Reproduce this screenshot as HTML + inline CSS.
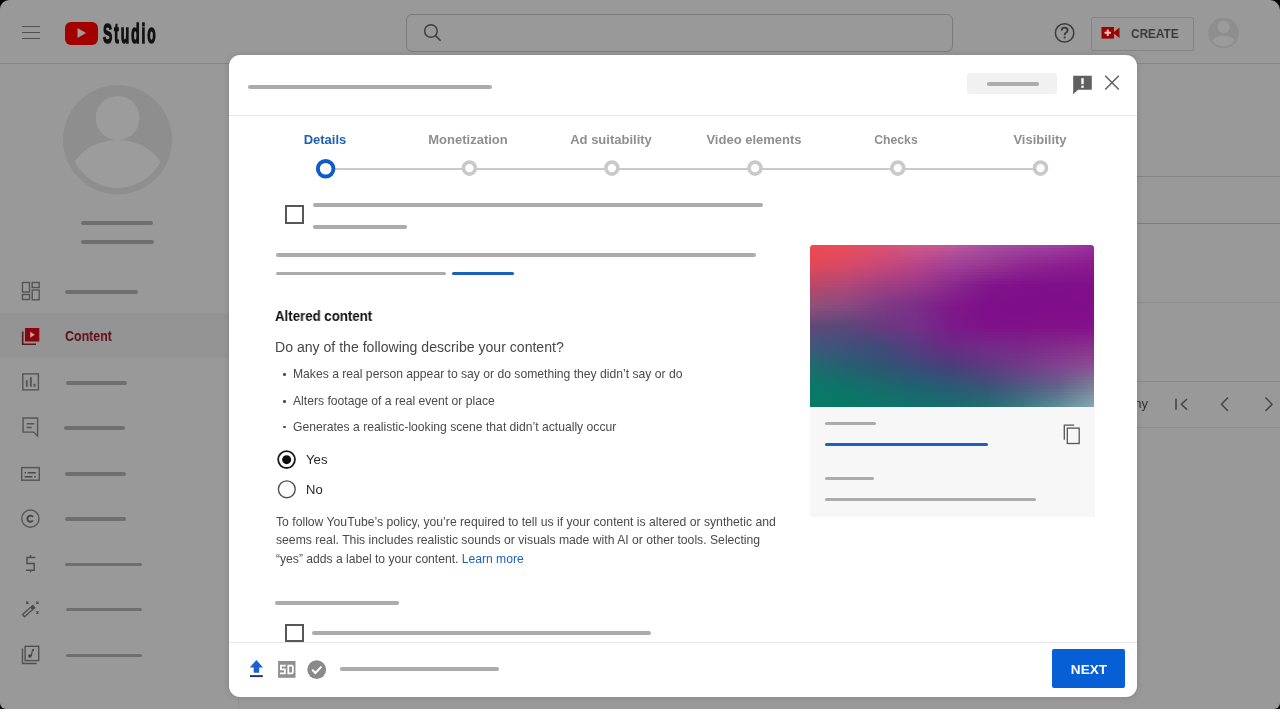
<!DOCTYPE html><html><head><meta charset="utf-8"><style>
html,body{margin:0;padding:0;background:#000;width:1280px;height:709px;overflow:hidden}
#pg{position:absolute;left:0;top:0;width:1280px;height:709px;background:#999;border-radius:9px 10px 6px 6px;overflow:hidden;font-family:"Liberation Sans",sans-serif}
.ln,.tx,.ic,.bx{position:absolute}
.tx{white-space:nowrap;will-change:transform}
</style></head><body><div id="pg">
<div class="bx" style="left:0;top:63px;width:1280px;height:1px;background:#888888"></div>
<div class="bx" style="left:238px;top:63px;width:1px;height:646px;background:#919191"></div>
<div class="bx" style="left:0;top:313px;width:238px;height:45px;background:#949494"></div>
<div class="bx" style="left:239px;top:176px;width:1041px;height:1px;background:#858585"></div>
<div class="bx" style="left:239px;top:223px;width:1041px;height:1px;background:#7d7d7d"></div>
<div class="bx" style="left:239px;top:302px;width:1041px;height:1px;background:#8f8f8f"></div>
<div class="bx" style="left:239px;top:381px;width:1041px;height:1px;background:#8a8a8a"></div>
<div class="bx" style="left:239px;top:427px;width:1041px;height:1px;background:#8b8b8b"></div>
<div class="bx" style="left:22px;top:25.85px;width:17.5px;height:1.5px;background:#505050"></div>
<div class="bx" style="left:22px;top:31.75px;width:17.5px;height:1.5px;background:#505050"></div>
<div class="bx" style="left:22px;top:37.65px;width:17.5px;height:1.5px;background:#505050"></div>
<div class="bx" style="left:65px;top:22px;width:32.5px;height:22.5px;border-radius:6px;background:#a30000"></div>
<svg class="ic" style="left:76px;top:27px" width="12" height="12" viewBox="0 0 12 12"><path d="M1.5 1 L10 6 L1.5 11 Z" fill="#a89898"/></svg>
<div class="tx" style="left:102.5px;top:19.5px;font-size:27.8px;line-height:27.8px;font-weight:bold;color:#121212;transform:scaleX(0.5);transform-origin:0 0;letter-spacing:3.8px;-webkit-text-stroke:1.5px #121212">Studio</div>
<div class="bx" style="left:406px;top:14px;width:545px;height:36px;border:1px solid #7c7c7c;border-radius:6px"></div>
<svg class="ic" style="left:422px;top:22px" width="22" height="22" viewBox="0 0 22 22"><circle cx="8.9" cy="9" r="6.3" fill="none" stroke="#3f3f3f" stroke-width="1.5"/><path d="M13.5 13.6 L18.6 18.8" stroke="#3f3f3f" stroke-width="1.6"/></svg>
<svg class="ic" style="left:1054px;top:22px" width="22" height="22" viewBox="0 0 22 22"><circle cx="10.6" cy="10.9" r="9.2" fill="none" stroke="#3c3c3c" stroke-width="1.5"/><path d="M7.6 8.6 Q7.6 5.6 10.6 5.6 Q13.6 5.6 13.6 8.3 Q13.6 9.9 11.9 10.8 Q10.6 11.5 10.6 13.2" fill="none" stroke="#3a3a3a" stroke-width="1.8"/><rect x="9.65" y="14.6" width="1.9" height="1.9" fill="#3a3a3a"/></svg>
<div class="bx" style="left:1091px;top:16.5px;width:101px;height:32px;border:1px solid #858585;border-radius:2px"></div>
<svg class="ic" style="left:1101px;top:27px" width="19" height="12" viewBox="0 0 19 12"><rect x="0.5" y="0" width="12.5" height="11.6" fill="#a00000"/><path d="M12 5.8 L18.5 0.6 L18.5 11 Z" fill="#a00000"/><path d="M6.75 2.6 V9 M3.5 5.8 H10" stroke="#e8c8c8" stroke-width="2"/></svg>
<div class="tx" style="left:1130.7px;top:26.5px;font-size:13.4px;line-height:13.4px;color:#3a3a3a;font-weight:bold;transform:scaleX(0.88);transform-origin:0 0">CREATE</div>
<svg class="ic" style="left:1207px;top:17px" width="33" height="33" viewBox="0 0 33 33"><defs><clipPath id="ca"><circle cx="16.5" cy="16" r="13.6"/></clipPath></defs><circle cx="16.5" cy="16" r="15.3" fill="#8e8e8e"/><g clip-path="url(#ca)"><circle cx="16.5" cy="10" r="6" fill="#9b9b9b"/><ellipse cx="16.5" cy="28" rx="12.5" ry="9.5" fill="#9b9b9b"/></g><circle cx="16.5" cy="10" r="6" fill="#9b9b9b"/></svg>
<svg class="ic" style="left:62px;top:84px" width="112" height="112" viewBox="0 0 112 112"><defs><clipPath id="cb"><circle cx="55.6" cy="55.8" r="48"/></clipPath></defs><circle cx="55.6" cy="55.8" r="54.5" fill="#8e8e8e"/><g clip-path="url(#cb)"><circle cx="55.6" cy="34" r="21.8" fill="#9c9c9c"/><ellipse cx="55.6" cy="100" rx="50" ry="44" fill="#9c9c9c"/></g><circle cx="55.6" cy="34" r="21.8" fill="#9c9c9c"/></svg>
<div class="ln" style="left:80.5px;top:221.0px;width:72.5px;height:3.8px;border-radius:1.9px;background:#6f6f6f"></div>
<div class="ln" style="left:81.2px;top:240.0px;width:72.8px;height:3.8px;border-radius:1.9px;background:#6f6f6f"></div>
<svg class="ic" style="left:21px;top:281px" width="20" height="20" viewBox="0 0 20 20"><g fill="none" stroke="#555" stroke-width="1.4"><rect x="1.5" y="1.5" width="7" height="9.5"/><rect x="1.5" y="13.5" width="7" height="5"/><rect x="11.2" y="1.5" width="7" height="5"/><rect x="11.2" y="9" width="7" height="9.8"/></g></svg>
<div class="ln" style="left:65.4px;top:289.9px;width:72.8px;height:3.9px;border-radius:1.95px;background:#6f6f6f"></div>
<svg class="ic" style="left:21px;top:327px" width="20" height="20" viewBox="0 0 20 20"><rect x="4" y="1" width="14.3" height="13.5" fill="#8a0410"/><path d="M1.7 4.5 V17.2 H15" fill="none" stroke="#5a1a1a" stroke-width="1.6"/><path d="M9.2 4.8 L13.8 7.8 L9.2 10.8 Z" fill="#c8a0a0"/></svg>
<div class="tx" style="left:65.3px;top:329.4px;font-size:14.2px;line-height:14.2px;color:#640c16;font-weight:bold;transform:scaleX(0.875);transform-origin:0 0">Content</div>
<svg class="ic" style="left:21px;top:372px" width="20" height="20" viewBox="0 0 20 20"><rect x="1.8" y="1.9" width="15.6" height="16" fill="none" stroke="#555" stroke-width="1.4"/><rect x="4.8" y="8.2" width="1.9" height="6.6" fill="#555"/><rect x="8.9" y="5.2" width="1.9" height="9.6" fill="#555"/><rect x="12.4" y="11.8" width="2.1" height="3" fill="#555"/></svg>
<div class="ln" style="left:65.9px;top:380.9px;width:61.5px;height:3.9px;border-radius:1.95px;background:#6f6f6f"></div>
<svg class="ic" style="left:21px;top:416px" width="20" height="22" viewBox="0 0 20 22"><path d="M2.1 2 H16.6 V20 L12.6 16.1 H2.1 Z" fill="none" stroke="#555" stroke-width="1.4" stroke-linejoin="miter"/><path d="M5.7 7.7 H13.3 M5.7 11.5 H10.8" stroke="#555" stroke-width="1.4"/></svg>
<div class="ln" style="left:64.1px;top:426.2px;width:61.4px;height:3.9px;border-radius:1.95px;background:#6f6f6f"></div>
<svg class="ic" style="left:20px;top:466px" width="21" height="16" viewBox="0 0 21 16"><rect x="1.7" y="1.6" width="17.6" height="12.6" fill="none" stroke="#555" stroke-width="1.4"/><path d="M4.6 6.8 H6 M7.6 6.8 H15.8 M4.6 10.8 H12.4 M14.2 10.8 H15.8" stroke="#4a4a4a" stroke-width="1.6"/></svg>
<div class="ln" style="left:65.0px;top:471.8px;width:61.4px;height:3.9px;border-radius:1.95px;background:#6f6f6f"></div>
<svg class="ic" style="left:20px;top:508px" width="21" height="21" viewBox="0 0 21 21"><circle cx="10.4" cy="10.65" r="8.6" fill="none" stroke="#555" stroke-width="1.4"/><path d="M12.9 8.9 A3.05 3.05 0 1 0 12.9 12.5" fill="none" stroke="#444" stroke-width="1.9"/></svg>
<div class="ln" style="left:64.9px;top:516.9px;width:61.6px;height:3.9px;border-radius:1.95px;background:#6f6f6f"></div>
<svg class="ic" style="left:22px;top:553px" width="16" height="22" viewBox="0 0 16 22"><path d="M13.4 4.5 H5 V10.4 H12.2 V17.2 H3.9 M8.5 2.1 V4.5 M8.5 17.2 V19.2" fill="none" stroke="#4f4f4f" stroke-width="1.5" stroke-linejoin="miter"/></svg>
<div class="ln" style="left:64.9px;top:562.5px;width:76.9px;height:3.9px;border-radius:1.95px;background:#6f6f6f"></div>
<svg class="ic" style="left:21px;top:598px" width="20" height="21" viewBox="0 0 20 21"><path d="M1.51 16.48 L11.81 7.38 L13.79 9.62 L3.49 18.72 Z" fill="none" stroke="#4f4f4f" stroke-width="1.3"/><path d="M9.21 9.68 L11.81 7.38 L13.79 9.62 L11.19 11.92 Z" fill="#4a4a4a"/><path d="M5.2 3.6 L7.4 5.8 M7.4 3.6 L5.2 5.8 M15.3 3.6 L17.5 5.8 M17.5 3.6 L15.3 5.8 M15.3 13.3 L17.5 15.5 M17.5 13.3 L15.3 15.5" stroke="#4a4a4a" stroke-width="1.2"/></svg>
<div class="ln" style="left:65.7px;top:607.5px;width:76.1px;height:3.9px;border-radius:1.95px;background:#6f6f6f"></div>
<svg class="ic" style="left:21px;top:645px" width="20" height="20" viewBox="0 0 20 20"><rect x="4.1" y="1.3" width="13.65" height="14.3" fill="none" stroke="#4f4f4f" stroke-width="1.35"/><path d="M1.5 3.5 V18.5 H15.6" fill="none" stroke="#4f4f4f" stroke-width="1.35"/><circle cx="8.9" cy="11" r="1.75" fill="#444"/><path d="M10.4 11 L11.4 5.2" stroke="#444" stroke-width="1.1"/><circle cx="12.1" cy="5.1" r="1.1" fill="#444"/></svg>
<div class="ln" style="left:66.3px;top:653.5px;width:75.5px;height:3.9px;border-radius:1.95px;background:#6f6f6f"></div>
<div class="tx" style="left:1048px;width:100px;text-align:right;top:396.7px;font-size:13px;line-height:13px;color:#333">many</div>
<svg class="ic" style="left:1172px;top:396px" width="20" height="16" viewBox="0 0 20 16"><path d="M4 2.8 V13.7" stroke="#464646" stroke-width="1.6"/><path d="M15 3 L9.4 8.3 L15 13.6" fill="none" stroke="#464646" stroke-width="1.5"/></svg>
<svg class="ic" style="left:1217px;top:396px" width="16" height="16" viewBox="0 0 16 16"><path d="M11 1.6 L4.5 8.3 L11 15" fill="none" stroke="#464646" stroke-width="1.5"/></svg>
<svg class="ic" style="left:1261px;top:396px" width="16" height="16" viewBox="0 0 16 16"><path d="M4.5 1.6 L11 8.3 L4.5 15" fill="none" stroke="#464646" stroke-width="1.5"/></svg>
<div class="bx" style="left:229px;top:55px;width:908px;height:642px;background:#fff;border-radius:11px;box-shadow:0 0 6px rgba(0,0,0,0.15)"></div>
<div class="ln" style="left:248.0px;top:85.1px;width:244.0px;height:4px;border-radius:2.0px;background:#acacac"></div>
<div class="bx" style="left:967px;top:73.4px;width:89.5px;height:20.6px;border-radius:3px;background:#f1f1f1"></div>
<div class="ln" style="left:987.0px;top:82.2px;width:52.0px;height:3.6px;border-radius:1.8px;background:#acacac"></div>
<svg class="ic" style="left:1072px;top:75px" width="21" height="20" viewBox="0 0 21 20"><path d="M1.2 0.8 H19.8 V14.8 H6 L1.2 19.2 Z" fill="#606060"/><rect x="9.3" y="3.2" width="2.4" height="6" fill="#fff"/><rect x="9.3" y="10.6" width="2.4" height="2.3" fill="#fff"/></svg>
<svg class="ic" style="left:1104px;top:75px" width="16" height="16" viewBox="0 0 16 16"><path d="M1.2 0.8 L14.8 14.5 M14.8 0.8 L1.2 14.5" stroke="#5f5f5f" stroke-width="1.5"/></svg>
<div class="bx" style="left:229px;top:114.5px;width:908px;height:1px;background:#e8e8e8"></div>
<div class="tx" style="left:125.2px;width:400px;text-align:center;top:133.0px;font-size:13px;line-height:13px;color:#1f5fb6;font-weight:bold;">Details</div>
<div class="tx" style="left:267.9px;width:400px;text-align:center;top:133.0px;font-size:13px;line-height:13px;color:#8f8f8f;font-weight:bold;">Monetization</div>
<div class="tx" style="left:411.3px;width:400px;text-align:center;top:133.0px;font-size:13px;line-height:13px;color:#8f8f8f;font-weight:bold;">Ad suitability</div>
<div class="tx" style="left:553.7px;width:400px;text-align:center;top:133.0px;font-size:13px;line-height:13px;color:#8f8f8f;font-weight:bold;">Video elements</div>
<div class="tx" style="left:696.1px;width:400px;text-align:center;top:133.7px;font-size:12.2px;line-height:12.2px;color:#8f8f8f;font-weight:bold;">Checks</div>
<div class="tx" style="left:839.5px;width:400px;text-align:center;top:133.0px;font-size:13px;line-height:13px;color:#8f8f8f;font-weight:bold;">Visibility</div>
<div class="bx" style="left:326px;top:167.5px;width:714px;height:2px;background:#cacaca"></div>
<svg class="ic" style="left:300px;top:150px" width="760" height="40" viewBox="0 0 760 40"><circle cx="25.65" cy="18.75" r="7.8" fill="#fff" stroke="#0f5cc8" stroke-width="3.9"/><circle cx="169.40" cy="18.1" r="6.0" fill="#fff" stroke="#c9c9c9" stroke-width="3.6"/><circle cx="311.90" cy="18.1" r="6.0" fill="#fff" stroke="#c9c9c9" stroke-width="3.6"/><circle cx="455.00" cy="18.1" r="6.0" fill="#fff" stroke="#c9c9c9" stroke-width="3.6"/><circle cx="597.80" cy="18.1" r="6.0" fill="#fff" stroke="#c9c9c9" stroke-width="3.6"/><circle cx="740.50" cy="18.1" r="6.0" fill="#fff" stroke="#c9c9c9" stroke-width="3.6"/></svg>
<div class="bx" style="left:284.8px;top:205.2px;width:15px;height:15px;border:2px solid #575757"></div>
<div class="ln" style="left:312.7px;top:202.9px;width:450.5px;height:3.8px;border-radius:1.9px;background:#acacac"></div>
<div class="ln" style="left:312.7px;top:225.4px;width:94.4px;height:3.6px;border-radius:1.8px;background:#acacac"></div>
<div class="ln" style="left:275.7px;top:253.3px;width:480.0px;height:3.8px;border-radius:1.9px;background:#acacac"></div>
<div class="ln" style="left:275.7px;top:271.5px;width:170.6px;height:3.6px;border-radius:1.8px;background:#acacac"></div>
<div class="ln" style="left:452.4px;top:271.5px;width:61.8px;height:3.6px;border-radius:1.8px;background:#1b5fbf"></div>
<div class="tx" style="left:275.4px;top:309.4px;font-size:14px;line-height:14px;color:#0f0f0f;font-weight:bold;transform:scaleX(0.946);transform-origin:0 0">Altered content</div>
<div class="tx" style="left:274.7px;top:339.9px;font-size:14.08px;line-height:14.08px;color:#474747;font-weight:normal;">Do any of the following describe your content?</div>
<div class="bx" style="left:283.3px;top:373.3px;width:2.6px;height:2.6px;border-radius:50%;background:#4a4a4a"></div>
<div class="tx" style="left:292.8px;top:368.3px;font-size:12.15px;line-height:12.15px;color:#4a4a4a;font-weight:normal;">Makes a real person appear to say or do something they didn’t say or do</div>
<div class="bx" style="left:283.3px;top:400.1px;width:2.6px;height:2.6px;border-radius:50%;background:#4a4a4a"></div>
<div class="tx" style="left:292.8px;top:395.1px;font-size:12.15px;line-height:12.15px;color:#4a4a4a;font-weight:normal;">Alters footage of a real event or place</div>
<div class="bx" style="left:283.3px;top:425.9px;width:2.6px;height:2.6px;border-radius:50%;background:#4a4a4a"></div>
<div class="tx" style="left:292.8px;top:420.9px;font-size:12.15px;line-height:12.15px;color:#4a4a4a;font-weight:normal;">Generates a realistic-looking scene that didn’t actually occur</div>
<svg class="ic" style="left:270px;top:445px" width="30" height="55" viewBox="0 0 30 55"><circle cx="16.55" cy="14.6" r="8.4" fill="none" stroke="#1a1a1a" stroke-width="1.8"/><circle cx="16.65" cy="14.65" r="4.5" fill="#0d0d0d"/><circle cx="16.8" cy="44.3" r="8.4" fill="none" stroke="#505050" stroke-width="1.4"/></svg>
<div class="tx" style="left:305.7px;top:453.1px;font-size:13.2px;line-height:13.2px;color:#262626;font-weight:normal;">Yes</div>
<div class="tx" style="left:306.0px;top:483.2px;font-size:13.0px;line-height:13.0px;color:#262626;font-weight:normal;">No</div>
<div class="tx" style="left:275.7px;top:516.0px;font-size:12.19px;line-height:12.19px;color:#4a4a4a;font-weight:normal;">To follow YouTube’s policy, you’re required to tell us if your content is altered or synthetic and</div>
<div class="tx" style="left:275.7px;top:534.3px;font-size:12.2px;line-height:12.2px;color:#4a4a4a;font-weight:normal;">seems real. This includes realistic sounds or visuals made with AI or other tools. Selecting</div>
<div class="tx" style="left:275.7px;top:553.2px;font-size:12.12px;line-height:12.12px;color:#4a4a4a;font-weight:normal;">“yes” adds a label to your content. <span style="color:#1c62b9">Learn more</span></div>
<div class="ln" style="left:275.0px;top:601.1px;width:123.5px;height:3.6px;border-radius:1.8px;background:#acacac"></div>
<div class="bx" style="left:285px;top:623.5px;width:14.8px;height:14.8px;border:2px solid #575757"></div>
<div class="ln" style="left:311.9px;top:631.0px;width:338.9px;height:3.8px;border-radius:1.9px;background:#acacac"></div>
<div class="bx" style="left:229px;top:642px;width:908px;height:1px;background:#e6e6e6"></div>
<svg class="ic" style="left:249px;top:659px" width="15" height="20" viewBox="0 0 15 20"><path d="M7.4 1 L14 8.6 H10.2 V13.8 H4.7 V8.6 H0.8 Z" fill="#1b62d0"/><rect x="1" y="16.1" width="12.8" height="2" fill="#203a70"/></svg>
<svg class="ic" style="left:278px;top:661px" width="18" height="17" viewBox="0 0 18 17"><rect x="0.1" y="-0.3" width="17.4" height="17.1" fill="#8f8f8f"/><g fill="none" stroke="#fff" stroke-width="1.75"><path d="M7.8 4.5 H2.9 V8.45 H6.9 V12.4 H2"/><path d="M10.3 4.5 H13.6 Q14.9 4.5 14.9 5.9 V11 Q14.9 12.4 13.6 12.4 H10.3 Z"/></g></svg>
<svg class="ic" style="left:307px;top:660px" width="20" height="20" viewBox="0 0 20 20"><circle cx="9.7" cy="9.6" r="9.4" fill="#8a8a8a"/><path d="M5.2 9.8 L8.4 13 L14.5 6.6" fill="none" stroke="#fff" stroke-width="2"/></svg>
<div class="ln" style="left:340.0px;top:667.3px;width:158.5px;height:3.6px;border-radius:1.8px;background:#acacac"></div>
<div class="bx" style="left:1052.2px;top:649.2px;width:72.8px;height:39.1px;border-radius:2px;background:#065fd4"></div>
<div class="tx" style="left:888.6px;width:400px;text-align:center;top:662.7px;font-size:13.6px;line-height:13.6px;color:#ffffff;font-weight:bold;">NEXT</div>
<div class="bx" style="left:809.8px;top:407.4px;width:285.6px;height:110px;background:#f7f7f7"></div>
<div class="bx" style="left:809.6px;top:245.2px;width:284.9px;height:162.2px;border-radius:3px 3px 0 0;overflow:hidden"><div style="height:3.004px;background:linear-gradient(90deg,#ef4851 0.0%,#e74c5d 12.5%,#db4f71 25.0%,#ce5888 37.5%,#bf5698 50.0%,#a74e9f 62.5%,#9f469f 75.0%,#9f3e9f 87.5%,#972e9f 100.0%)"></div><div style="height:3.004px;background:linear-gradient(90deg,#ec4852 0.0%,#e44c5e 12.5%,#d84e72 25.0%,#cb5588 37.5%,#ba5398 50.0%,#a44b9c 62.5%,#9c419c 75.0%,#9c399c 87.5%,#952b9c 100.0%)"></div><div style="height:3.004px;background:linear-gradient(90deg,#ea4853 0.0%,#e24b60 12.5%,#d54d73 25.0%,#c75288 37.5%,#b54f98 50.0%,#a2479a 62.5%,#9a3c9a 75.0%,#99349a 87.5%,#932899 100.0%)"></div><div style="height:3.004px;background:linear-gradient(90deg,#e84854 0.0%,#e04b61 12.5%,#d24c74 25.0%,#c44f88 37.5%,#b04c98 50.0%,#a04498 62.5%,#983798 75.0%,#962f98 87.5%,#912596 100.0%)"></div><div style="height:3.004px;background:linear-gradient(90deg,#e54855 0.0%,#dd4b63 12.5%,#cf4b75 25.0%,#c04b88 37.5%,#ab4898 50.0%,#9d4095 62.5%,#953395 75.0%,#932b95 87.5%,#8f2193 100.0%)"></div><div style="height:3.004px;background:linear-gradient(90deg,#e34857 0.0%,#db4a64 12.5%,#cc4977 25.0%,#bc4888 37.5%,#a64498 50.0%,#9b3c93 62.5%,#932e93 75.0%,#902693 87.5%,#8d1e90 100.0%)"></div><div style="height:3.004px;background:linear-gradient(90deg,#e14858 0.0%,#d94a66 12.5%,#c94878 25.0%,#b94588 37.5%,#a14198 50.0%,#993991 62.5%,#912991 75.0%,#8d2191 87.5%,#8b1b8d 100.0%)"></div><div style="height:3.004px;background:linear-gradient(90deg,#dc485a 0.0%,#d44a68 12.5%,#c44779 25.0%,#b44388 37.5%,#9e3e97 50.0%,#95348f 62.5%,#8e258f 75.0%,#8a1e8f 87.5%,#89198c 100.0%)"></div><div style="height:3.004px;background:linear-gradient(90deg,#d6485c 0.0%,#ce496b 12.5%,#be467a 25.0%,#b04188 37.5%,#9a3a95 50.0%,#922f8e 62.5%,#8c228e 75.0%,#881c8e 87.5%,#87178b 100.0%)"></div><div style="height:3.004px;background:linear-gradient(90deg,#d0485f 0.0%,#c8496d 12.5%,#b8457b 25.0%,#ab3f88 37.5%,#973793 50.0%,#8e2a8e 62.5%,#891e8e 75.0%,#86198e 87.5%,#86168b 100.0%)"></div><div style="height:3.004px;background:linear-gradient(90deg,#ca4861 0.0%,#c24970 12.5%,#b2447c 25.0%,#a63d88 37.5%,#943491 50.0%,#8b258d 62.5%,#871b8d 75.0%,#84178d 87.5%,#84148b 100.0%)"></div><div style="height:3.004px;background:linear-gradient(90deg,#c44863 0.0%,#bc4973 12.5%,#ac427e 25.0%,#a13c88 37.5%,#913190 50.0%,#871f8c 62.5%,#85178c 75.0%,#82158c 87.5%,#83138b 100.0%)"></div><div style="height:3.004px;background:linear-gradient(90deg,#be4866 0.0%,#b64875 12.5%,#a6417f 25.0%,#9d3a88 37.5%,#8d2d8e 50.0%,#841a8b 62.5%,#82148b 75.0%,#80128b 87.5%,#81118a 100.0%)"></div><div style="height:3.004px;background:linear-gradient(90deg,#b84868 0.0%,#b04878 12.5%,#a04080 25.0%,#983888 37.5%,#8a2a8c 50.0%,#80158a 62.5%,#80108a 75.0%,#7e108a 87.5%,#80108a 100.0%)"></div><div style="height:3.004px;background:linear-gradient(90deg,#b2496a 0.0%,#aa4879 12.5%,#9b3f81 25.0%,#943788 37.5%,#89278b 50.0%,#80148a 62.5%,#80108a 75.0%,#7e108a 87.5%,#80108a 100.0%)"></div><div style="height:3.004px;background:linear-gradient(90deg,#ac4a6d 0.0%,#a5497a 12.5%,#963f81 25.0%,#8f3688 37.5%,#87258b 50.0%,#7f148a 62.5%,#7f1089 75.0%,#7f0f89 87.5%,#810f8a 100.0%)"></div><div style="height:3.004px;background:linear-gradient(90deg,#a64c6f 0.0%,#9f497c 12.5%,#913e82 25.0%,#8b3488 37.5%,#86228a 50.0%,#7f138a 62.5%,#7f1089 75.0%,#7f0f89 87.5%,#810f8a 100.0%)"></div><div style="height:3.004px;background:linear-gradient(90deg,#a04d71 0.0%,#99497d 12.5%,#8c3e82 25.0%,#863388 37.5%,#841f8a 50.0%,#7f128a 62.5%,#7f0f89 75.0%,#7f0f89 87.5%,#810f8a 100.0%)"></div><div style="height:3.004px;background:linear-gradient(90deg,#9a4e74 0.0%,#94497e 12.5%,#873d83 25.0%,#823288 37.5%,#831d89 50.0%,#7f118a 62.5%,#7f0f89 75.0%,#7f0f89 87.5%,#810f8a 100.0%)"></div><div style="height:3.004px;background:linear-gradient(90deg,#944f76 0.0%,#8e4a7f 12.5%,#823c84 25.0%,#7d3188 37.5%,#811a88 50.0%,#7e118a 62.5%,#7e0f88 75.0%,#800e88 87.5%,#820e8a 100.0%)"></div><div style="height:3.004px;background:linear-gradient(90deg,#8e5078 0.0%,#884a80 12.5%,#7d3c84 25.0%,#7a3088 37.5%,#801888 50.0%,#7e108a 62.5%,#7e0f88 75.0%,#800e88 87.5%,#820e8a 100.0%)"></div><div style="height:3.004px;background:linear-gradient(90deg,#874f78 0.0%,#814a7f 12.5%,#7a3c83 25.0%,#793088 37.5%,#7f1888 50.0%,#7e108a 62.5%,#7e0f88 75.0%,#800e88 87.5%,#820e8a 100.0%)"></div><div style="height:3.004px;background:linear-gradient(90deg,#804d78 0.0%,#79497d 12.5%,#773b83 25.0%,#783088 37.5%,#7e1988 50.0%,#7e1089 62.5%,#7f0f88 75.0%,#810f89 87.5%,#830f8a 100.0%)"></div><div style="height:3.004px;background:linear-gradient(90deg,#794c78 0.0%,#72497c 12.5%,#743b82 25.0%,#773088 37.5%,#7d1988 50.0%,#7e1089 62.5%,#7f0f88 75.0%,#810f89 87.5%,#830f8a 100.0%)"></div><div style="height:3.004px;background:linear-gradient(90deg,#724b78 0.0%,#6b497b 12.5%,#713b81 25.0%,#763088 37.5%,#7c1988 50.0%,#7e1089 62.5%,#7f1088 75.0%,#810f89 87.5%,#830f8a 100.0%)"></div><div style="height:3.004px;background:linear-gradient(90deg,#6b4a78 0.0%,#63487a 12.5%,#6e3a81 25.0%,#753088 37.5%,#7b1a88 50.0%,#7e1088 62.5%,#801088 75.0%,#82108a 87.5%,#84108a 100.0%)"></div><div style="height:3.004px;background:linear-gradient(90deg,#644978 0.0%,#5c4879 12.5%,#6b3a80 25.0%,#743088 37.5%,#7a1a88 50.0%,#7e1088 62.5%,#801088 75.0%,#82108a 87.5%,#84108a 100.0%)"></div><div style="height:3.004px;background:linear-gradient(90deg,#5d4978 0.0%,#564978 12.5%,#673b80 25.0%,#723187 37.5%,#791b88 50.0%,#7d1288 62.5%,#801288 75.0%,#82128a 87.5%,#84128a 100.0%)"></div><div style="height:3.004px;background:linear-gradient(90deg,#584c78 0.0%,#534a78 12.5%,#613e7f 25.0%,#6e3286 37.5%,#761e87 50.0%,#7c1688 62.5%,#7f1588 75.0%,#82168a 87.5%,#85178a 100.0%)"></div><div style="height:3.004px;background:linear-gradient(90deg,#534e79 0.0%,#4f4b79 12.5%,#5a407e 25.0%,#6a3485 37.5%,#742087 50.0%,#7a1a88 62.5%,#7e1988 75.0%,#821a8a 87.5%,#861c8b 100.0%)"></div><div style="height:3.004px;background:linear-gradient(90deg,#4e5079 0.0%,#4c4c79 12.5%,#54427d 25.0%,#653584 37.5%,#722286 50.0%,#791d88 62.5%,#7d1c88 75.0%,#821f8a 87.5%,#87218b 100.0%)"></div><div style="height:3.004px;background:linear-gradient(90deg,#495379 0.0%,#484d79 12.5%,#4e457c 25.0%,#613783 37.5%,#6f2585 50.0%,#772188 62.5%,#7c2088 75.0%,#82238a 87.5%,#88258b 100.0%)"></div><div style="height:3.004px;background:linear-gradient(90deg,#44557a 0.0%,#444f7a 12.5%,#48477b 25.0%,#5d3881 37.5%,#6d2785 50.0%,#762588 62.5%,#7b2488 75.0%,#82278a 87.5%,#892a8c 100.0%)"></div><div style="height:3.004px;background:linear-gradient(90deg,#3f577a 0.0%,#41507a 12.5%,#42497a 25.0%,#593a80 37.5%,#6b2984 50.0%,#742988 62.5%,#7a2788 75.0%,#822b8a 87.5%,#8a2f8c 100.0%)"></div><div style="height:3.004px;background:linear-gradient(90deg,#3b5a79 0.0%,#3d5279 12.5%,#3e4b79 25.0%,#553c7f 37.5%,#662c83 50.0%,#722c87 62.5%,#792a88 75.0%,#822f8b 87.5%,#8a348d 100.0%)"></div><div style="height:3.004px;background:linear-gradient(90deg,#365d77 0.0%,#395477 12.5%,#3b4d78 25.0%,#503e7e 37.5%,#622f81 50.0%,#6e2e86 62.5%,#772d88 75.0%,#81328c 87.5%,#8a388e 100.0%)"></div><div style="height:3.004px;background:linear-gradient(90deg,#326075 0.0%,#355776 12.5%,#394f77 25.0%,#4c417e 37.5%,#5d3280 50.0%,#6b3185 62.5%,#763088 75.0%,#81368c 87.5%,#8a3d8f 100.0%)"></div><div style="height:3.004px;background:linear-gradient(90deg,#2d6373 0.0%,#305974 12.5%,#365176 25.0%,#47437d 37.5%,#58357e 50.0%,#683384 62.5%,#743388 75.0%,#81398d 87.5%,#8a4290 100.0%)"></div><div style="height:3.004px;background:linear-gradient(90deg,#296672 0.0%,#2c5b73 12.5%,#335274 25.0%,#43457c 37.5%,#53387d 50.0%,#653582 62.5%,#733688 75.0%,#813d8e 87.5%,#8a4792 100.0%)"></div><div style="height:3.004px;background:linear-gradient(90deg,#246970 0.0%,#285e71 12.5%,#315473 25.0%,#3e487b 37.5%,#4f3b7b 50.0%,#613881 62.5%,#713988 75.0%,#80408f 87.5%,#8a4b93 100.0%)"></div><div style="height:3.004px;background:linear-gradient(90deg,#206c6e 0.0%,#246070 12.5%,#2e5672 25.0%,#3a4a7a 37.5%,#4a3e7a 50.0%,#5e3a80 62.5%,#703c88 75.0%,#804490 87.5%,#8a5094 100.0%)"></div><div style="height:3.004px;background:linear-gradient(90deg,#1d6e6d 0.0%,#21636f 12.5%,#2b5971 25.0%,#364e79 37.5%,#454279 50.0%,#593e7f 62.5%,#6b4087 75.0%,#7b498f 87.5%,#885795 100.0%)"></div><div style="height:3.004px;background:linear-gradient(90deg,#19706c 0.0%,#1d656e 12.5%,#275c70 25.0%,#325177 37.5%,#414678 50.0%,#53427e 62.5%,#664586 75.0%,#774d8e 87.5%,#855e95 100.0%)"></div><div style="height:3.004px;background:linear-gradient(90deg,#16716b 0.0%,#1a686c 12.5%,#245f6f 25.0%,#2e5576 37.5%,#3c4a77 50.0%,#4e467c 62.5%,#614985 75.0%,#72528d 87.5%,#836596 100.0%)"></div><div style="height:3.004px;background:linear-gradient(90deg,#13736a 0.0%,#176b6b 12.5%,#21626e 25.0%,#295874 37.5%,#374f76 50.0%,#49497b 62.5%,#5c4e84 75.0%,#6d578c 87.5%,#816c96 100.0%)"></div><div style="height:3.004px;background:linear-gradient(90deg,#10756a 0.0%,#146d6a 12.5%,#1e656e 25.0%,#255c73 37.5%,#325376 50.0%,#434d7a 62.5%,#575284 75.0%,#685c8c 87.5%,#7e7497 100.0%)"></div><div style="height:3.004px;background:linear-gradient(90deg,#0c7769 0.0%,#107069 12.5%,#1a686d 25.0%,#215f71 37.5%,#2e5775 50.0%,#3e5179 62.5%,#525783 75.0%,#64608b 87.5%,#7c7b98 100.0%)"></div><div style="height:3.004px;background:linear-gradient(90deg,#0a7868 0.0%,#0e7268 12.5%,#186a6c 25.0%,#1d6370 37.5%,#295b74 50.0%,#395578 62.5%,#4d5b82 75.0%,#60668b 87.5%,#7b8299 100.0%)"></div><div style="height:3.004px;background:linear-gradient(90deg,#0a7867 0.0%,#0d7367 12.5%,#166c6b 25.0%,#1b656f 37.5%,#275d73 50.0%,#365977 62.5%,#4a6082 75.0%,#5f6c8d 87.5%,#7d889c 100.0%)"></div><div style="height:3.004px;background:linear-gradient(90deg,#097967 0.0%,#0c7567 12.5%,#146e6b 25.0%,#19676f 37.5%,#246073 50.0%,#325d77 62.5%,#476581 75.0%,#5e728f 87.5%,#7f8ea0 100.0%)"></div><div style="height:3.004px;background:linear-gradient(90deg,#097966 0.0%,#0b7666 12.5%,#12706a 25.0%,#17696e 37.5%,#216372 50.0%,#2e6176 62.5%,#436981 75.0%,#5d7891 87.5%,#8194a4 100.0%)"></div><div style="height:3.004px;background:linear-gradient(90deg,#097965 0.0%,#0a7765 12.5%,#107269 25.0%,#156b6d 37.5%,#1f6571 50.0%,#2b6475 62.5%,#406e81 75.0%,#5c7e93 87.5%,#839aa7 100.0%)"></div><div style="height:3.004px;background:linear-gradient(90deg,#087a65 0.0%,#097865 12.5%,#0f7369 25.0%,#136d6d 37.5%,#1c6871 50.0%,#276875 62.5%,#3d7380 75.0%,#5b8595 87.5%,#85a1ab 100.0%)"></div><div style="height:3.004px;background:linear-gradient(90deg,#087a64 0.0%,#087964 12.5%,#0d7568 25.0%,#116f6c 37.5%,#196b70 50.0%,#246c74 62.5%,#3a7880 75.0%,#5a8b97 87.5%,#87a7ae 100.0%)"></div></div>
<div class="ln" style="left:824.5px;top:421.7px;width:51.5px;height:3px;border-radius:1.5px;background:#acacac"></div>
<div class="ln" style="left:824.5px;top:443.1px;width:163.2px;height:3.4px;border-radius:1.7px;background:#1b5fbf"></div>
<div class="ln" style="left:825.0px;top:477.1px;width:49.0px;height:3px;border-radius:1.5px;background:#acacac"></div>
<div class="ln" style="left:825.0px;top:498.3px;width:210.5px;height:3px;border-radius:1.5px;background:#acacac"></div>
<svg class="ic" style="left:1062px;top:423px" width="19" height="22" viewBox="0 0 19 22"><path d="M2.3 16.7 V2.1 H12.2" fill="none" stroke="#555" stroke-width="1.3"/><rect x="5.3" y="5.1" width="11.9" height="15.4" fill="none" stroke="#555" stroke-width="1.3"/></svg>
</div></body></html>
